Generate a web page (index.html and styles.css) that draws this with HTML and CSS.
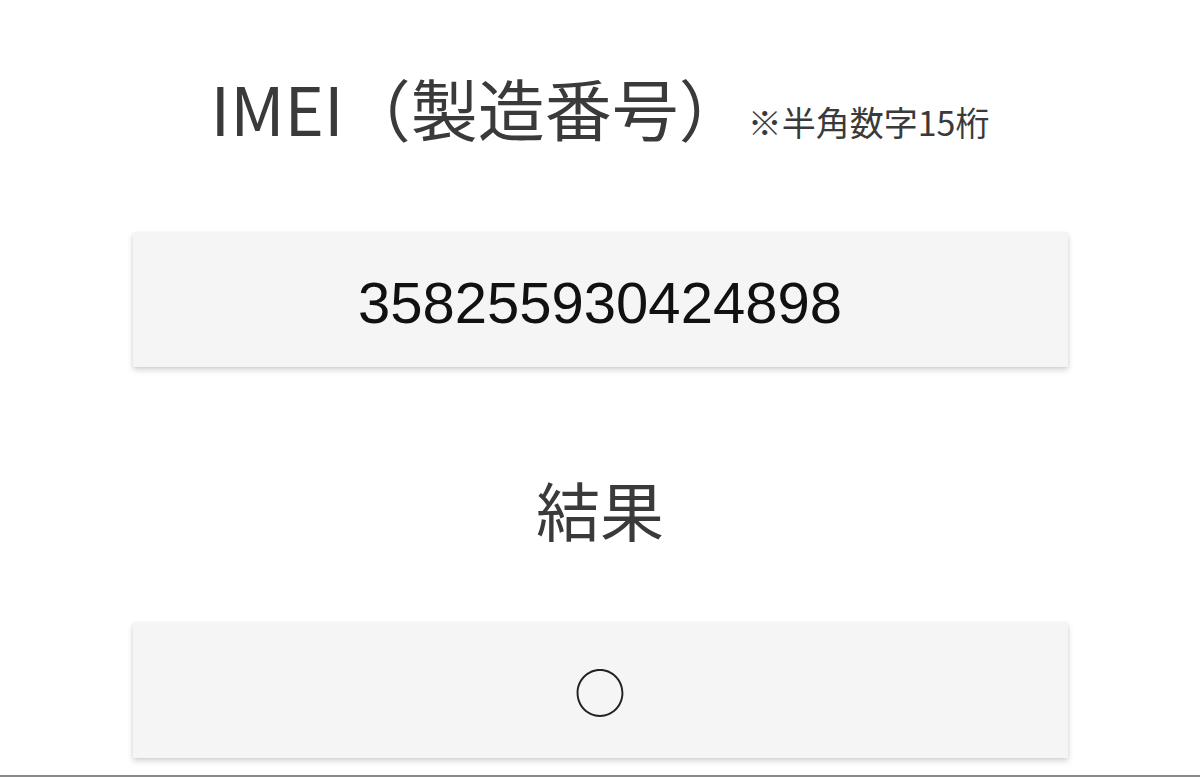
FILE: index.html
```html
<!DOCTYPE html>
<html lang="ja">
<head>
<meta charset="utf-8">
<link rel="stylesheet" href="styles.css">
</head>
<body>
<div class="page">
  <div class="title-row">
    <h1 class="title">IMEI（製造番号）</h1>
    <span class="note">※半角数字15桁</span>
  </div>
  <div class="box box-imei"><span class="imei">358255930424898</span></div>
  <h2 class="result-label">結果</h2>
  <div class="box box-result"><span class="mark">○</span></div>
</div>
</body>
</html>
```
FILE: styles.css
```css
html, body {
  margin: 0;
  padding: 0;
  background: #ffffff;
}
.page {
  box-sizing: border-box;
  height: 777px;
  border-bottom: 2px solid #8a8a8a;
  display: flex;
  flex-direction: column;
  align-items: center;
  font-family: "Noto Sans CJK JP", "Noto Sans", sans-serif;
  color: #3a3a3a;
  overflow: hidden;
}
.title-row {
  display: flex;
  align-items: baseline;
  margin-top: 73px;
  gap: 2px;
}
.title {
  margin: 0;
  font-size: 67px;
  font-weight: 400;
  line-height: 1;
  letter-spacing: 0;
}
.note {
  font-size: 34px;
  line-height: 1;
}
.box {
  width: 935px;
  height: 134px;
  background: #f5f5f5;
  box-shadow: 0 3px 6px rgba(0, 0, 0, 0.17), 0 0 3px rgba(0, 0, 0, 0.07);
  display: flex;
  align-items: center;
  justify-content: center;
}
.box-imei {
  margin-top: 93px;
}
.imei {
  font-family: "Liberation Sans", Arial, sans-serif;
  font-size: 58px;
  color: #111111;
  line-height: 1;
  padding-top: 6px;
}
.result-label {
  margin: 109px 0 0;
  font-size: 64px;
  font-weight: 400;
  line-height: 1;
}
.box-result {
  margin-top: 83px;
  height: 135px;
}
.mark {
  font-size: 52px;
  line-height: 1;
  color: #222222;
}
```
